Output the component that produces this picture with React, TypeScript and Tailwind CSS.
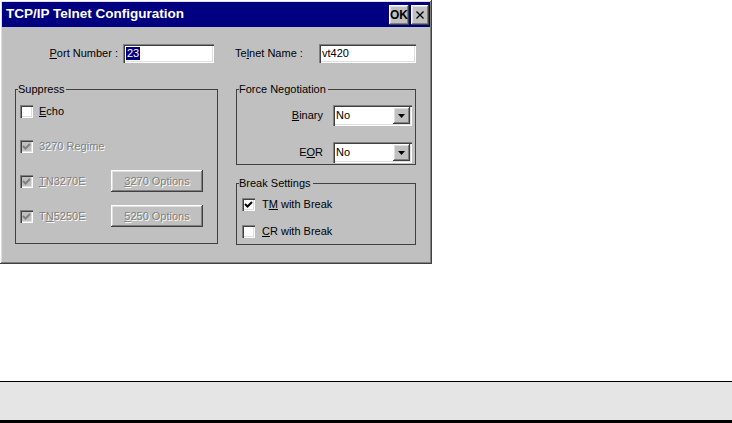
const sunken =
  "shadow-[inset_1px_1px_0_#808080,inset_2px_2px_0_#404040,inset_-1px_-1px_0_#fff,inset_-2px_-2px_0_#dfdfdf]";
const raised =
  "shadow-[inset_-1px_-1px_0_#404040,inset_1px_1px_0_#fff,inset_-2px_-2px_0_#808080,inset_2px_2px_0_#dfdfdf]";
const dim = "text-[#808080] [text-shadow:1px_1px_0_#fff]";

function Check({ checked, disabled }: { checked?: boolean; disabled?: boolean }) {
  return (
    <span
      className={`flex h-[13px] w-[13px] shrink-0 items-center justify-center ${
        disabled ? "bg-[#c0c0c0]" : "bg-white"
      } ${sunken}`}
    >
      {checked && (
        <svg width="9" height="9" viewBox="0 0 9 9">
          <polyline
            points="1,4 3.5,6.5 8,2"
            fill="none"
            stroke={disabled ? "#808080" : "#000"}
            strokeWidth="2"
          />
        </svg>
      )}
    </span>
  );
}

function Group({
  title,
  className,
  children,
}: {
  title: string;
  className: string;
  children: React.ReactNode;
}) {
  return (
    <div className={`relative border border-[#404040] ${className}`}>
      <span className="absolute -top-[8px] left-[2px] bg-[#c0c0c0] pr-[2px] leading-[14px]">
        {title}
      </span>
      {children}
    </div>
  );
}

function Select({ value }: { value: string }) {
  return (
    <div className={`flex h-[21px] w-[79px] items-center bg-white pl-[3px] pr-[2px] ${sunken}`}>
      <span className="flex-1">{value}</span>
      <span className={`flex h-[17px] w-[17px] items-center justify-center bg-[#c0c0c0] ${raised}`}>
        <svg width="7" height="4" viewBox="0 0 7 4">
          <polygon points="0,0 7,0 3.5,4" fill="#000" />
        </svg>
      </span>
    </div>
  );
}

function OptButton({ children }: { children: React.ReactNode }) {
  return (
    <span className={`flex h-[22px] w-[92px] items-center justify-center bg-[#c0c0c0] ${raised} ${dim}`}>
      {children}
    </span>
  );
}

export default function App() {
  return (
    <div className="flex h-[423px] flex-col bg-white font-['Liberation_Sans',Arial,sans-serif] text-[11px] text-black">
      <div className={`flex h-[264px] w-[432px] flex-col bg-[#c0c0c0] p-[2px] ${raised}`}>
        <div className="flex h-[25px] items-center bg-[#000080] pl-[4px] pr-[1px]">
          <span className="flex-1 text-[13.5px] font-bold text-white">TCP/IP Telnet Configuration</span>
          <span className={`flex h-[20px] w-[20px] items-center justify-center bg-[#c0c0c0] text-[12px] font-bold ${raised}`}>
            OK
          </span>
          <span className={`ml-[2px] flex h-[20px] w-[18px] items-center justify-center bg-[#c0c0c0] ${raised}`}>
            <svg width="8" height="8" viewBox="0 0 8 8">
              <path d="M0.5 0.5 L7.5 7.5 M7.5 0.5 L0.5 7.5" stroke="#000" strokeWidth="1.3" />
            </svg>
          </span>
        </div>

        <div className="grid grid-cols-[203px_180px] gap-x-[18px] pl-[13px] pt-[17px]">
          <div className="flex h-[19px] items-center justify-end pr-[4px]">
            <span>
              <u>P</u>ort Number :
            </span>
            <span className={`ml-[5px] flex h-[19px] w-[91px] items-center bg-white pl-[3px] ${sunken}`}>
              <span className="bg-[#000080] px-[1px] leading-[13px] text-white">23</span>
            </span>
          </div>
          <div className="flex h-[19px] items-center">
            <span className="-ml-[1px]">
              Te<u>l</u>net Name :
            </span>
            <span className={`ml-auto flex h-[19px] w-[97px] items-center bg-white pl-[3px] ${sunken}`}>
              vt420
            </span>
          </div>

          <Group title="Suppress" className="mt-[26px] h-[155px]">
            <div className="flex flex-col gap-[13px] pl-[4px] pt-[10px]">
              <div className="flex h-[22px] items-center gap-[6px]">
                <Check />
                <span>
                  <u>E</u>cho
                </span>
              </div>
              <div className="flex h-[22px] items-center gap-[6px]">
                <Check checked disabled />
                <span className={dim}>
                  3270 Re<u>g</u>ime
                </span>
              </div>
              <div className="flex h-[22px] items-center">
                <div className="flex w-[91px] items-center gap-[6px]">
                  <Check checked disabled />
                  <span className={dim}>
                    <u>T</u>N3270E
                  </span>
                </div>
                <OptButton>
                  <u>3</u>270 Options
                </OptButton>
              </div>
              <div className="flex h-[22px] items-center">
                <div className="flex w-[91px] items-center gap-[6px]">
                  <Check checked disabled />
                  <span className={dim}>
                    T<u>N</u>5250E
                  </span>
                </div>
                <OptButton>
                  <u>5</u>250 Options
                </OptButton>
              </div>
            </div>
          </Group>

          <div className="mt-[26px] flex flex-col gap-[18px]">
            <Group title="Force Negotiation" className="h-[76px]">
              <div className="flex flex-col gap-[16px] pr-[3px] pt-[15px]">
                <div className="flex h-[21px] items-center justify-end gap-[10px]">
                  <span>
                    <u>B</u>inary
                  </span>
                  <Select value="No" />
                </div>
                <div className="flex h-[21px] items-center justify-end gap-[10px]">
                  <span>
                    E<u>O</u>R
                  </span>
                  <Select value="No" />
                </div>
              </div>
            </Group>
            <Group title="Break Settings" className="h-[62px]">
              <div className="flex flex-col gap-[7px] pl-[5px] pt-[10px]">
                <div className="flex h-[20px] items-center gap-[7px]">
                  <Check checked />
                  <span>
                    T<u>M</u> with Break
                  </span>
                </div>
                <div className="flex h-[20px] items-center gap-[7px]">
                  <Check />
                  <span>
                    <u>C</u>R with Break
                  </span>
                </div>
              </div>
            </Group>
          </div>
        </div>
      </div>

      <div className="flex-1" />
      <div className="h-[39px] border-t border-black bg-[#e5e5e5]" />
      <div className="h-[3px] bg-black" />
    </div>
  );
}
